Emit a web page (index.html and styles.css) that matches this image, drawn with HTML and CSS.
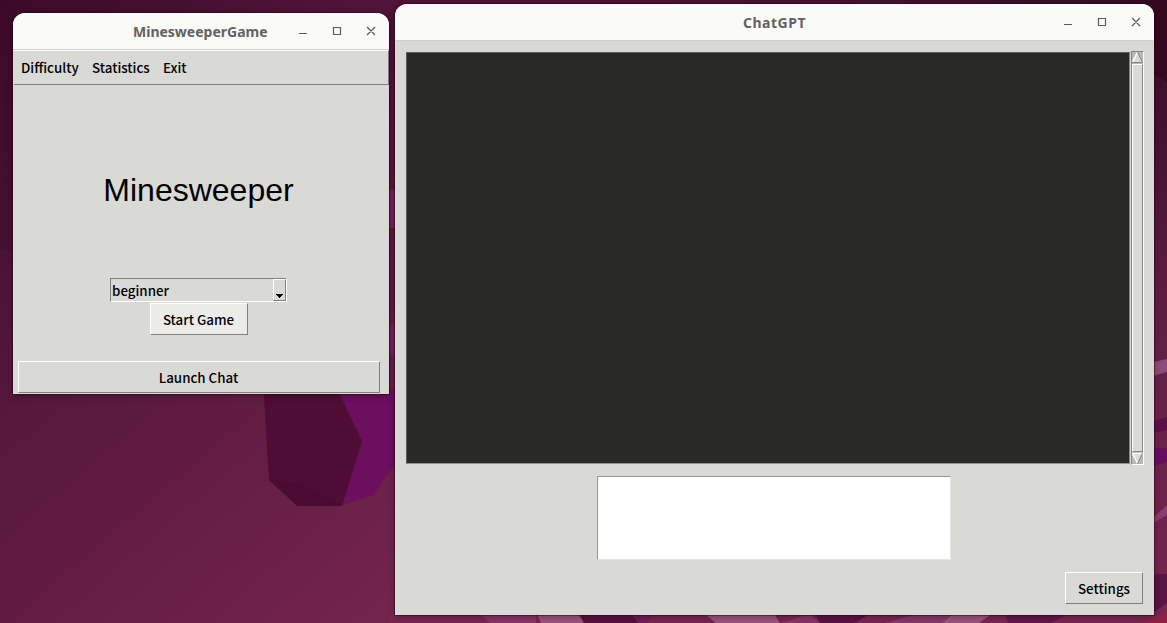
FILE: index.html
```html
<!DOCTYPE html>
<html lang="en">
<head>
<meta charset="utf-8">
<title>Desktop</title>
<link rel="stylesheet" href="styles.css">
</head>
<body>
<main class="desktop">
  <svg class="wallpaper" viewBox="0 0 1167 623" aria-hidden="true">
    <defs>
      <linearGradient id="base" gradientUnits="userSpaceOnUse" x1="0" y1="170" x2="390" y2="623">
        <stop offset="0" stop-color="#451130"/><stop offset=".22" stop-color="#50163a"/><stop offset=".5" stop-color="#5f1b40"/><stop offset="1" stop-color="#74254c"/>
      </linearGradient>
      <linearGradient id="top" x1="0" x2="1" y1="0" y2="0">
        <stop offset="0" stop-color="#3c0a28"/><stop offset=".3" stop-color="#501438"/><stop offset=".7" stop-color="#4a1235"/><stop offset="1" stop-color="#350a22"/>
      </linearGradient>
      <linearGradient id="left" x1="0" x2="0" y1="0" y2="1">
        <stop offset="0" stop-color="#3c0a28"/><stop offset="1" stop-color="#451130"/>
      </linearGradient>
      <linearGradient id="side" x1="0" x2="0" y1="0" y2="1">
        <stop offset="0" stop-color="#380a24"/><stop offset=".2" stop-color="#46102f"/><stop offset=".55" stop-color="#641f47"/><stop offset="1" stop-color="#78264d"/>
      </linearGradient>
      <linearGradient id="gap" x1="0" x2="0" y1="0" y2="1">
        <stop offset="0" stop-color="#4d1236"/><stop offset=".4" stop-color="#5b183d"/><stop offset="1" stop-color="#6b2149"/>
      </linearGradient>
    </defs>
    <path fill="url(#base)" d="M0 0h1167v623H0z"/>
    <path fill="url(#top)" d="M0 0h1167v30H0z"/>
    <path fill="url(#left)" d="M0 0h14v250H0z"/>
    <path fill="url(#gap)" d="M385 12h12v382h-12z"/>
    <path fill="#75245f" d="M388 190h8v38h-8zM388 325h8v30h-8z"/>
    <path fill="#5b124e" d="M264 390h130v10H264z"/>
    <path fill="#6b0f5e" d="M330 390h66v73l-23 32-31 10-10-60z"/>
    <path fill="#4f0c35" d="M264 398l3-8h69l3 3 23 48-20 65h-45l-28-26z"/>
    <path fill="#490b32" d="M269 480l28 3 45 22h-45z"/>
    <path fill="url(#side)" d="M1150 0h17v623h-17z"/>
    <path fill="#350820" d="M1150 0h17v82l-17-10z"/>
    <path fill="#904979" d="M1153 362l14-3v13l-14 4z"/>
    <path fill="#5c1146" d="M1153 421l14-4v13l-14 3z"/>
    <path fill="#670d61" d="M1153 448h14v14l-14 4z"/>
    <path fill="#8b3c70" d="M1153 518l14-13v10l-14 8z"/>
    <path fill="#5b1444" d="M1153 574h14v29l-14 10z"/>
    <path fill="#792650" d="M390 614h777v9H390z"/>
    <path fill="#873568" d="M480 614h56v9h-46z"/>
    <path fill="#9b557f" d="M537 614h41l6 9h-43z"/>
    <path fill="#571141" d="M580 614h52l8 9h-56z"/>
    <path fill="#701d58" d="M632 614h20l-4 9h-10z"/>
    <path fill="#9b557f" d="M705 614h69l6 9h-64z"/>
    <path fill="#853567" d="M780 623l30-9 10 9z"/>
    <path fill="#5a1245" d="M815 614h55l-16 9h-34z"/>
    <path fill="#85386a" d="M885 623l30-9h35l-5 9z"/>
    <path fill="#9b557f" d="M952 614h40l-13 9h-36z"/>
    <path fill="#61164a" d="M1005 614h64l-18 9h-43z"/>
    <path fill="#8f2147" d="M1140 623l27-11v11z"/>
  </svg>

  <section class="window game">
    <header class="titlebar">
      <h1 class="title game-title">MinesweeperGame</h1>
      <svg class="controls" viewBox="0 0 80 14" aria-hidden="true"><path d="M0 9.500h8M34.500 3.500h7v7h-7zM68 3l8 8m0-8l-8 8"/></svg>
    </header>
    <nav class="menu"><span class="difficulty">Difficulty</span><span class="statistics">Statistics</span><span class="exit">Exit</span></nav>
    <div class="game-body">
      <h2 class="heading">Minesweeper</h2>
      <div class="combo"><span class="combo-value">beginner</span><span class="combo-button"><svg width="7" height="4" viewBox="0 0 7 4" shape-rendering="crispEdges"><path d="M0 0h7v1H6v1H5v1H4v1H3V3H2V2H1V1H0z"/></svg></span></div>
      <button class="button start"><span>Start Game</span></button>
      <button class="button launch"><span>Launch Chat</span></button>
    </div>
  </section>

  <section class="window chat">
    <header class="titlebar">
      <h1 class="title chat-title">ChatGPT</h1>
      <svg class="controls" viewBox="0 0 80 14" aria-hidden="true"><path d="M0 9.500h8M34.500 3.500h7v7h-7zM68 3l8 8m0-8l-8 8"/></svg>
    </header>
    <div class="chat-body">
      <div class="history">
        <div class="transcript"></div>
        <div class="scrollbar">
          <svg class="arrow" width="11" height="12" viewBox="0 0 11 12"><path fill="#dadbd6" d="M5.500 0l5.500 11H0z"/><path fill="none" stroke="#fff" stroke-width="1.500" d="M5.500 0L.5 10.500"/><path fill="none" stroke="#85867f" d="M5.500 0l5 10.500H0"/></svg>
          <div class="thumb"></div>
          <svg class="arrow" width="11" height="12" viewBox="0 0 11 12"><path fill="#dadbd6" d="M0 1h11L5.500 12z"/><path fill="none" stroke="#fff" stroke-width="1.500" d="M11 1.500H.5l5 10"/><path fill="none" stroke="#85867f" d="M10.500 1l-5 11"/></svg>
        </div>
      </div>
      <div class="prompt"></div>
      <button class="button settings"><span>Settings</span></button>
    </div>
  </section>
</main>
</body>
</html>
```

FILE: styles.css
```css
* { box-sizing: border-box; }
body { margin: 0; overflow: hidden; font: 500 13.33px/20px "Noto Sans CJK SC", "Noto Sans", sans-serif; color: #000; }
.desktop { position: relative; width: 1167px; height: 623px; overflow: hidden; }
.wallpaper { position: absolute; inset: 0; width: 1167px; height: 623px; }
.window { position: absolute; display: flex; flex-direction: column; background: #d9dad5; border-radius: 12px 12px 0 0; box-shadow: 0 0 0 1px rgba(40, 0, 25, .45), 0 2px 7px rgba(25, 0, 15, .35); }
.game { left: 13px; top: 13px; width: 376px; height: 381px; }
.chat { left: 395px; top: 4px; width: 759px; height: 611px; }
.titlebar { display: flex; align-items: center; justify-content: flex-end; height: 37px; flex: none; padding-right: 10px; background: #fafaf8; border-bottom: 1px solid #cfcfcb; border-radius: 12px 12px 0 0; }
.title { margin: 0; font: 700 14px/20px "Noto Sans", sans-serif; color: #62625e; white-space: nowrap; }
.game-title { width: 135px; margin-right: 31px; padding-top: 2px; }
.chat-title { width: 63px; margin-right: 258px; padding-top: 2px; letter-spacing: .5px; }
.controls { width: 80px; height: 14px; fill: none; stroke: #5b5c59; stroke-width: 1.2; }
.menu { display: flex; align-items: center; height: 35px; flex: none; margin-left: 1px; padding-left: 7px; border-top: 1px solid #fff; border-right: 1px solid #80817d; border-bottom: 1px solid #80817d; }
.difficulty { width: 71px; }
.statistics { width: 71px; }
.game-body { flex: 1; display: flex; flex-direction: column; align-items: center; padding-right: 5px; }
.heading { margin: 85px 0 68px; height: 40px; font: 400 32px/40px "Liberation Sans", sans-serif; }
.combo { display: flex; justify-content: space-between; width: 177px; height: 24px; flex: none; border: 1px solid #80817d; border-right-color: #fff; border-bottom-color: #fff; padding-left: 1px; }
.combo-value { line-height: 23px; }
.combo-button { display: flex; align-items: flex-end; justify-content: center; width: 13px; height: 22px; padding-bottom: 2px; border: 1px solid #fff; border-right-color: #80817d; border-bottom-color: #80817d; }
.button { display: flex; align-items: center; justify-content: center; height: 32px; flex: none; padding: 1px 0 0; border: 1px solid #fff; border-right-color: #80817d; border-bottom-color: #80817d; background: #d9dad5; font: inherit; color: inherit; }
.start { width: 98px; margin-top: 1px; background: #ebebe8; }
.launch { width: 362px; margin-top: 26px; }
.chat-body { display: flex; flex-direction: column; align-items: center; padding: 10px 10px 0 11px; }
.history { display: flex; width: 738px; height: 414px; gap: 1px; }
.transcript { width: 724px; height: 412px; margin-top: 1px; background: #292a25; border: 1px solid #5d5e58; border-right-color: #85867f; border-bottom-color: #92938c; }
.scrollbar { display: flex; flex-direction: column; align-items: center; width: 13px; height: 414px; background: #b7b8b3; border: 1px solid #85867f; border-right-color: #fff; border-bottom-color: #fff; }
.arrow { display: block; flex: none; }
.thumb { width: 11px; flex: 1; border: 1px solid #fff; border-right-color: #85867f; border-bottom-color: #85867f; background: #dadbd6; }
.prompt { width: 354px; height: 84px; margin: 11px 2px 0 0; background: #fff; border: 1px solid #969790; border-right-color: #e5e5e1; border-bottom-color: #e5e5e1; }
.settings { align-self: flex-end; width: 78px; margin: 12px 1px 0 0; }
```
